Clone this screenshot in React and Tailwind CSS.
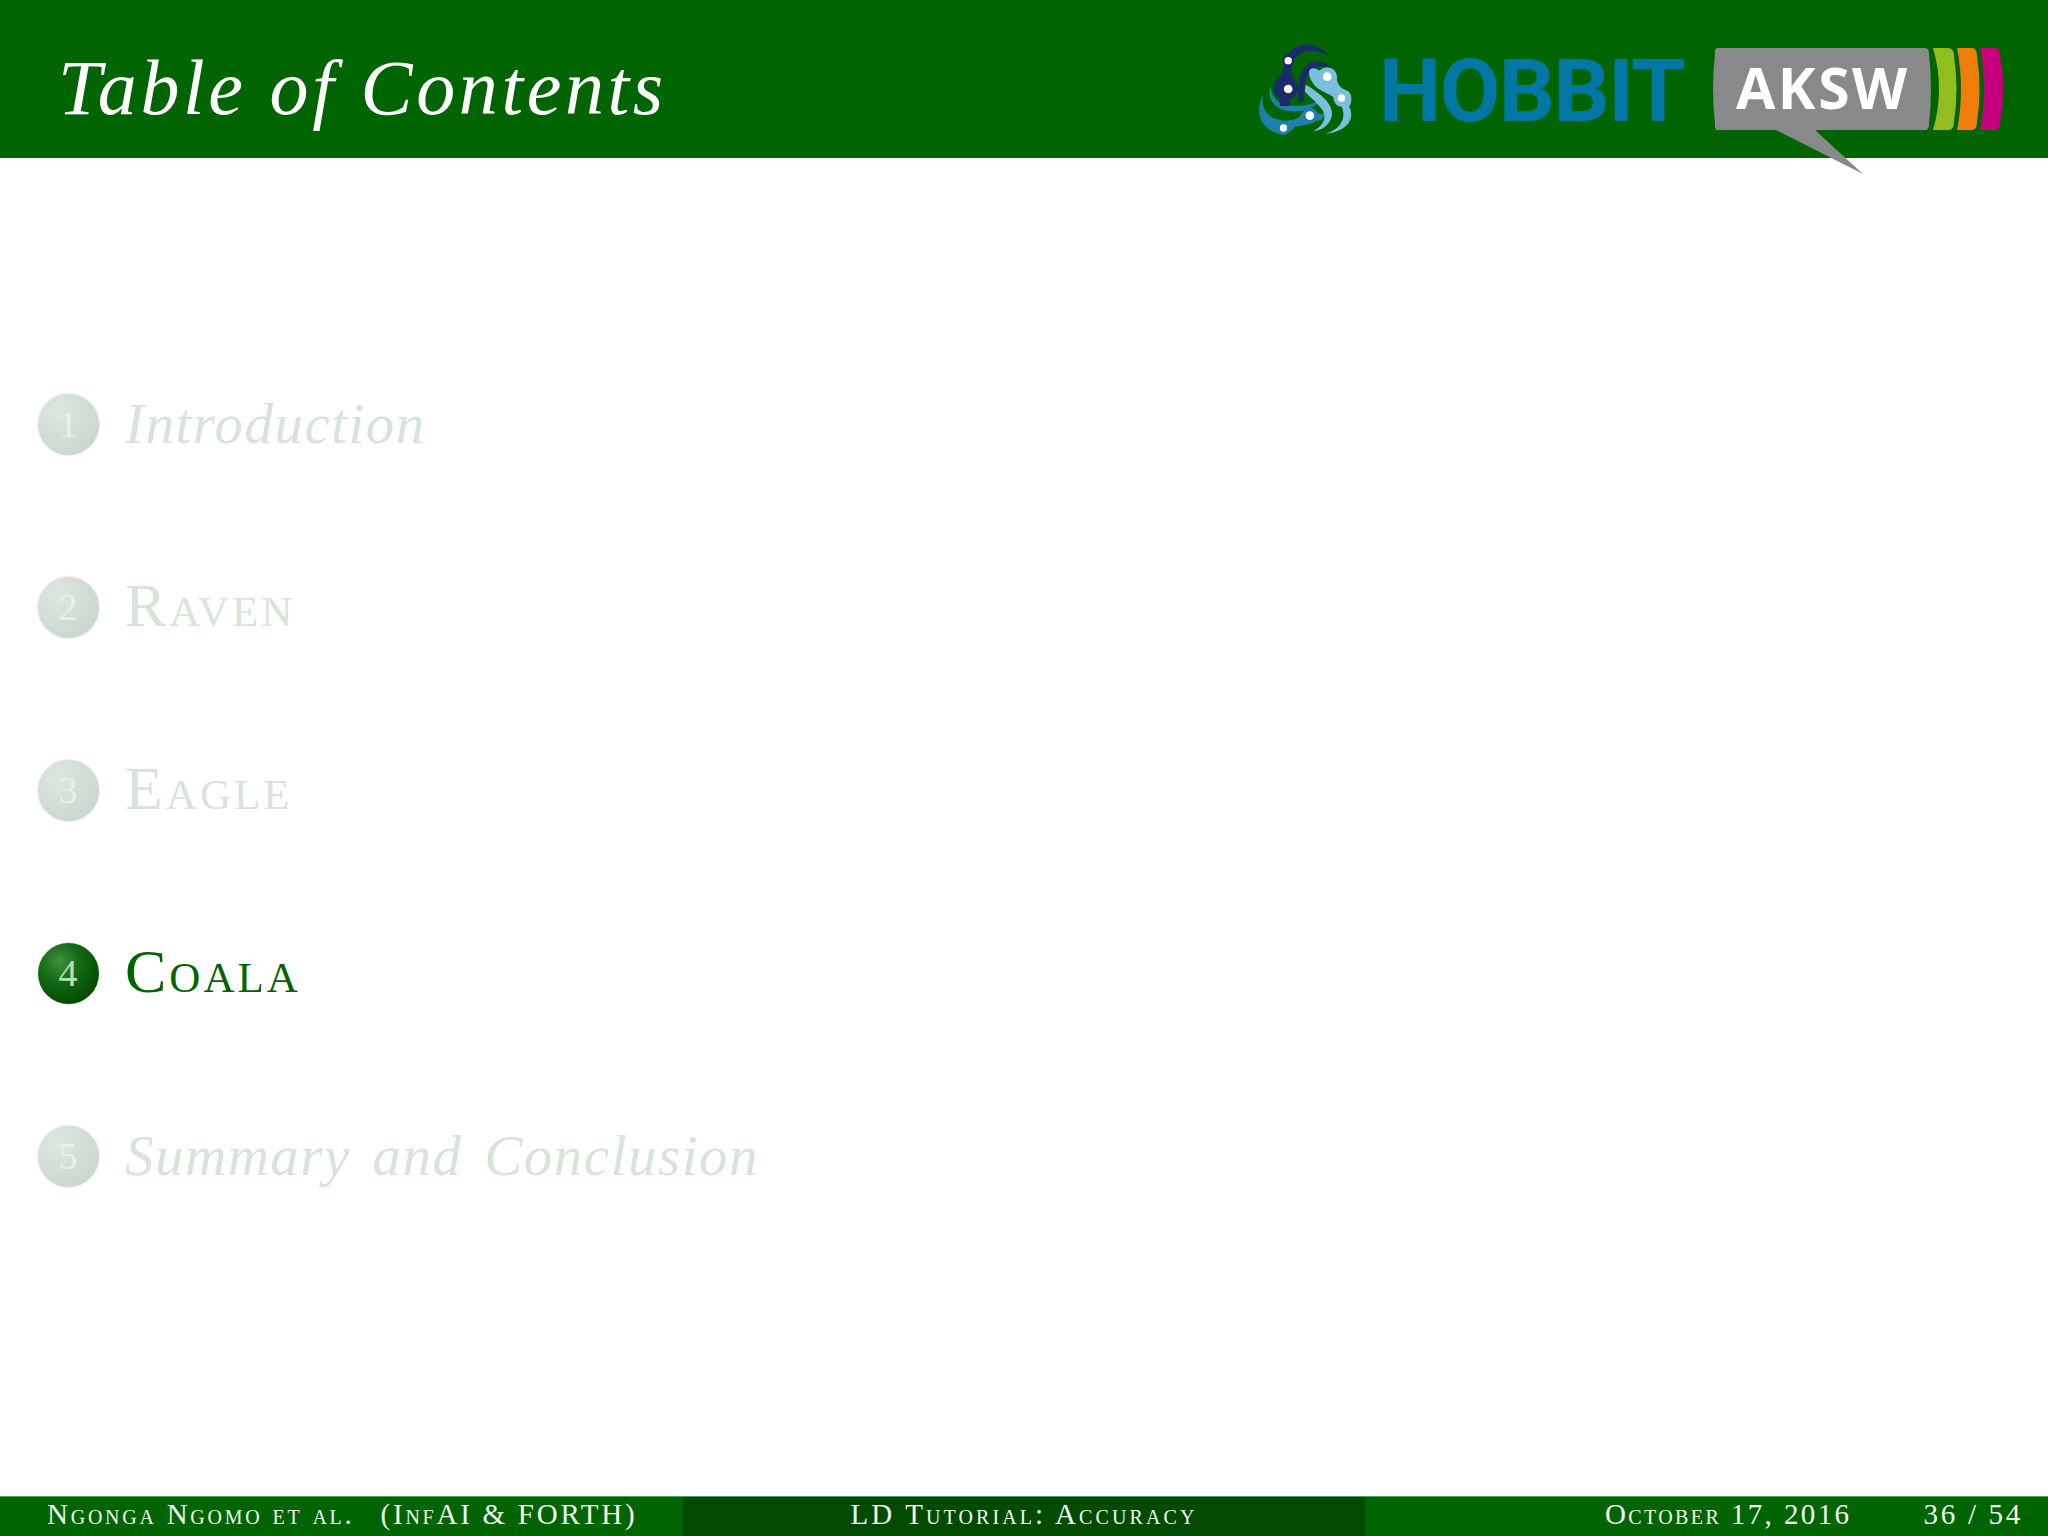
const serif = { fontFamily: '"Liberation Serif", serif' };

const sections = [
  { n: 1, title: 'Introduction', italic: true },
  { n: 2, title: 'Raven' },
  { n: 3, title: 'Eagle' },
  { n: 4, title: 'Coala', active: true },
  { n: 5, title: 'Summary and Conclusion', italic: true },
];

function HobbitMark() {
  return (
    <svg width="107" height="100" viewBox="40 55 320 300" className="shrink-0">
      {/* mid blue swirl */}
      <path d="M70 222C45 270 60 320 105 335C125 348 150 340 165 318C185 316 205 312 225 300C240 305 255 292 262 272C245 285 235 280 225 272C205 262 185 275 178 290C160 300 140 302 120 298C85 290 62 265 70 222Z" fill="#1b80aa" />
      <path d="M92 195C80 235 105 268 150 272C190 275 225 262 252 232C222 250 190 258 155 255C120 252 95 235 92 195Z" fill="#1b80aa" />
      <circle cx="210" cy="285" r="24" fill="#1b80aa" />
      <circle cx="131" cy="322" r="20" fill="#1b80aa" />
      {/* navy strands */}
      <path d="M265 105C240 72 195 62 160 85C140 98 132 115 132 140C128 155 122 165 112 175C95 195 100 225 118 232L120 256L150 256L150 235C170 225 178 205 170 188C158 170 152 155 158 130C165 95 215 75 265 105Z" fill="#1a2a6b" />
      <path d="M282 152C262 118 225 115 200 135C178 155 172 200 178 245L192 240C190 205 195 165 220 145C240 130 262 135 282 152Z" fill="#1a2a6b" />
      <circle cx="145" cy="120" r="18" fill="#1a2a6b" />
      <circle cx="145" cy="205" r="30" fill="#1a2a6b" />
      {/* light blue strand */}
      <path d="M208 150C215 138 228 142 238 150C255 140 285 150 292 180C298 200 310 205 325 212C340 225 335 250 328 258C345 290 330 330 255 340C305 325 325 290 300 245C275 220 250 215 232 202C220 190 205 170 208 150Z" fill="#7cbedd" />
      <path d="M198 192C255 225 295 265 268 305C255 322 240 330 220 332C255 312 265 285 240 258C225 240 205 225 195 212Z" fill="#7cbedd" />
      <circle cx="262" cy="170" r="30" fill="#7cbedd" />
      <circle cx="307" cy="232" r="26" fill="#7cbedd" />
      {/* nodes */}
      <circle cx="145" cy="120" r="11" fill="#fff" />
      <circle cx="145" cy="205" r="13" fill="#fff" />
      <circle cx="262" cy="168" r="13" fill="#fff" />
      <circle cx="305" cy="232" r="11" fill="#fff" />
      <circle cx="210" cy="285" r="13" fill="#fff" />
      <circle cx="131" cy="322" r="11" fill="#fff" />
    </svg>
  );
}

function AkswLogo() {
  return (
    <div className="relative ml-[27px] h-[82px] w-[292px] shrink-0">
      <svg width="292" height="126" viewBox="0 0 292 126" className="absolute left-0 top-0 overflow-visible">
        <path d="M6 0H212C216 0 217 2 217 6Q221 41 217 76C217 80 216 82 212 82H103L151 126L64 82H6C3 82 3 80 3 76Q-1 41 3 6C3 2 3 0 6 0Z" fill="#88898b" />
        <path d="M221 0H236C240 0 242 3 242 8Q247 41 242 74C242 79 240 82 236 82H221Q233 41 221 0Z" fill="#92bd1e" />
        <path d="M245 0H260C263 0 265 3 265 8Q270 41 265 74C265 79 263 82 260 82H245Q253 41 245 0Z" fill="#ee7d0c" />
        <path d="M268 0H284C287 0 288 3 288 8Q295 41 288 74C288 79 287 82 284 82H268Q276 41 268 0Z" fill="#c6007e" />
      </svg>
      <span
        className="absolute left-[24px] top-[-2px] text-[57px] font-bold leading-[82px] tracking-[2.5px] text-white"
        style={{ fontFamily: '"Open Sans", sans-serif' }}
      >
        AKSW
      </span>
    </div>
  );
}

function Ball({ n, active }) {
  return (
    <div
      className={
        'flex h-[61px] w-[61px] shrink-0 items-center justify-center rounded-full pb-[1px] pr-[1px] text-[38px] shadow-[0_0_2px_rgba(0,0,0,0.25)] ' +
        (active
          ? 'bg-[radial-gradient(circle_at_35%_30%,#3f8f3f_0%,#146a14_35%,#045004_70%,#022f02_100%)] text-[#b9dcb9]'
          : 'bg-[radial-gradient(circle_at_35%_30%,#dce7df_0%,#d0ddd5_50%,#c4d2c8_100%)] text-[#e9f1e9]')
      }
      style={serif}
    >
      {n}
    </div>
  );
}

function SectionRow({ n, title, italic, active }) {
  return (
    <div className="flex h-[183px] items-center pl-[38px]">
      <Ball n={n} active={active} />
      <div
        className={
          'ml-[26px] ' +
          (italic
            ? 'pb-[2px] text-[57px] italic tracking-[1.5px] [word-spacing:6px] '
            : 'pb-[4px] text-[62px] tracking-[3px] [font-variant:small-caps] ') +
          (active ? 'text-[#006400]' : 'text-[#d8e4d8]')
        }
        style={serif}
      >
        {title}
      </div>
    </div>
  );
}

export default function App() {
  return (
    <div className="flex h-[1536px] w-[2048px] flex-col overflow-hidden bg-white" style={serif}>
      {/* Title bar */}
      <header className="z-10 flex h-[158px] shrink-0 items-center bg-[#006400] pl-[58px] pr-[44px] pt-[20px]">
        <h1 className="flex-1 whitespace-nowrap pb-[4px] text-[78px] italic tracking-[3.6px] text-white">Table of Contents</h1>
        <HobbitMark />
        <div
          className="ml-[19px] w-[306px] shrink-0 whitespace-nowrap pt-[4px] text-[88px] font-bold leading-none tracking-[-1.5px] text-[#0077a5]"
          style={{ fontFamily: 'Roboto, sans-serif' }}
        >
          HOBBIT
        </div>
        <AkswLogo />
      </header>

      {/* Outline */}
      <main className="flex-1 pt-[175px]">
        {sections.map((s) => (
          <SectionRow key={s.n} {...s} />
        ))}
      </main>

      {/* Footer */}
      <footer className="grid h-[40px] shrink-0 grid-cols-3 border-t border-[#5c9c5c] text-[29px] leading-[35px] text-[#f2f7f2] [font-variant:small-caps]">
        <div className="whitespace-nowrap bg-[#006400] pl-[47px] tracking-[2.75px]">
          Ngonga Ngomo et al.&nbsp; <span className="ml-[6px]">(InfAI &amp; FORTH)</span>
        </div>
        <div className="whitespace-nowrap bg-[#004b00] text-center tracking-[3.1px]">LD Tutorial: Accuracy</div>
        <div className="flex justify-end gap-[72px] whitespace-nowrap bg-[#006400] pr-[25px]">
          <span className="tracking-[2.4px]">October 17, 2016</span>
          <span className="tracking-[2.7px]">36 / 54</span>
        </div>
      </footer>
    </div>
  );
}
